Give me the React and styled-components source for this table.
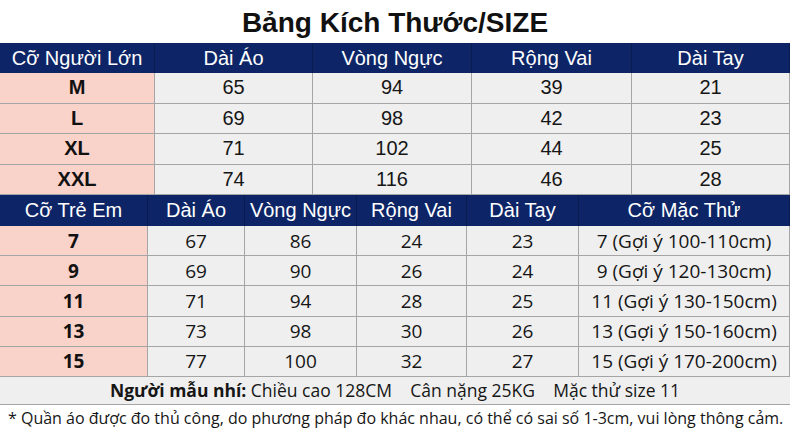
import styled, { createGlobalStyle } from 'styled-components';

const GlobalStyle = createGlobalStyle`
  body {
    margin: 0;
    background: #ffffff;
  }
`;

const adultHead = ['Cỡ Người Lớn', 'Dài Áo', 'Vòng Ngực', 'Rộng Vai', 'Dài Tay'];
const adultRows = [
  ['M', '65', '94', '39', '21'],
  ['L', '69', '98', '42', '23'],
  ['XL', '71', '102', '44', '25'],
  ['XXL', '74', '116', '46', '28'],
];

const kidHead = ['Cỡ Trẻ Em', 'Dài Áo', 'Vòng Ngực', 'Rộng Vai', 'Dài Tay', 'Cỡ Mặc Thử'];
const kidRows = [
  ['7', '67', '86', '24', '23', '7 (Gợi ý 100-110cm)'],
  ['9', '69', '90', '26', '24', '9 (Gợi ý 120-130cm)'],
  ['11', '71', '94', '28', '25', '11 (Gợi ý 130-150cm)'],
  ['13', '73', '98', '30', '26', '13 (Gợi ý 150-160cm)'],
  ['15', '77', '100', '32', '27', '15 (Gợi ý 170-200cm)'],
];

const arial = "'Liberation Sans', Arial, sans-serif";
const segoe = "'Open Sans', sans-serif";

export default function App() {
  return (
    <Page>
      <GlobalStyle />
      <Title>Bảng Kích Thước/SIZE</Title>

      <Table $cols="155px 158px 159px 160px 158px">
        {adultHead.map((h) => (
          <HeadCell key={h} $h={30}>{h}</HeadCell>
        ))}
        {adultRows.map((row) =>
          row.map((v, i) =>
            i === 0 ? (
              <SizeCell key={row[0] + i} $h={30.5} $font={arial} $size={20}>{v}</SizeCell>
            ) : (
              <Cell key={row[0] + i} $h={30.5} $font={arial} $size={20}>{v}</Cell>
            )
          )
        )}
      </Table>

      <Table $cols="148px 97px 112px 110px 112px 211px">
        {kidHead.map((h) => (
          <HeadCell key={h} $h={31}>{h}</HeadCell>
        ))}
        {kidRows.map((row) =>
          row.map((v, i) =>
            i === 0 ? (
              <SizeCell key={row[0] + i} $h={30.2} $font={segoe} $size={19}>{v}</SizeCell>
            ) : (
              <Cell key={row[0] + i} $h={30.2} $font={segoe} $size={19}>{v}</Cell>
            )
          )
        )}
      </Table>

      <ModelRow>
        <b>Người mẫu nhí:</b>&nbsp;Chiều cao 128CM&nbsp;&nbsp;&nbsp;&nbsp;Cân nặng 25KG&nbsp;&nbsp;&nbsp;&nbsp;Mặc thử size 11
      </ModelRow>
      <Note>* Quần áo được đo thủ công, do phương pháp đo khác nhau, có thể có sai số 1-3cm, vui lòng thông cảm.</Note>
    </Page>
  );
}

const Page = styled.div`
  width: 790px;
  height: 431px;
  overflow: hidden;
  background: #ffffff;
  display: flex;
  flex-direction: column;
`;

const Title = styled.div`
  height: 43px;
  display: flex;
  align-items: center;
  justify-content: center;
  font-family: 'Liberation Sans', Arial, sans-serif;
  font-weight: 700;
  font-size: 28px;
  color: #111;
  box-sizing: border-box;
  padding-top: 2px;
`;

const Table = styled.div`
  display: grid;
  grid-template-columns: ${(p) => p.$cols};
`;

const HeadCell = styled.div`
  height: ${(p) => p.$h}px;
  background: #0d2566;
  color: #ffffff;
  font-family: 'Liberation Sans', Arial, sans-serif;
  font-size: 20px;
  display: flex;
  align-items: center;
  justify-content: center;
  border-right: 1px solid #0a1d52;
  box-sizing: border-box;
  white-space: nowrap;
  &:last-child {
    border-right: none;
  }
`;

const Cell = styled.div`
  height: ${(p) => p.$h}px;
  background: #efefef;
  color: #161616;
  font-family: ${(p) => p.$font};
  font-size: ${(p) => p.$size}px;
  display: flex;
  align-items: center;
  justify-content: center;
  border-right: 1px solid #a5a5a5;
  border-bottom: 1px solid #a5a5a5;
  box-sizing: border-box;
  white-space: nowrap;
`;

const SizeCell = styled(Cell)`
  background: #f9d2ca;
  font-weight: 700;
  color: #111;
`;

const ModelRow = styled.div`
  height: 28px;
  background: #efefef;
  border-bottom: 1px solid #a5a5a5;
  box-sizing: border-box;
  display: flex;
  align-items: center;
  justify-content: center;
  font-family: 'Open Sans', sans-serif;
  font-size: 17.5px;
  color: #161616;
  white-space: nowrap;
  b {
    font-weight: 700;
  }
`;

const Note = styled.div`
  flex: 1;
  display: flex;
  align-items: center;
  padding-left: 8px;
  font-family: 'Open Sans', sans-serif;
  font-size: 16px;
  color: #161616;
  white-space: nowrap;
`;
